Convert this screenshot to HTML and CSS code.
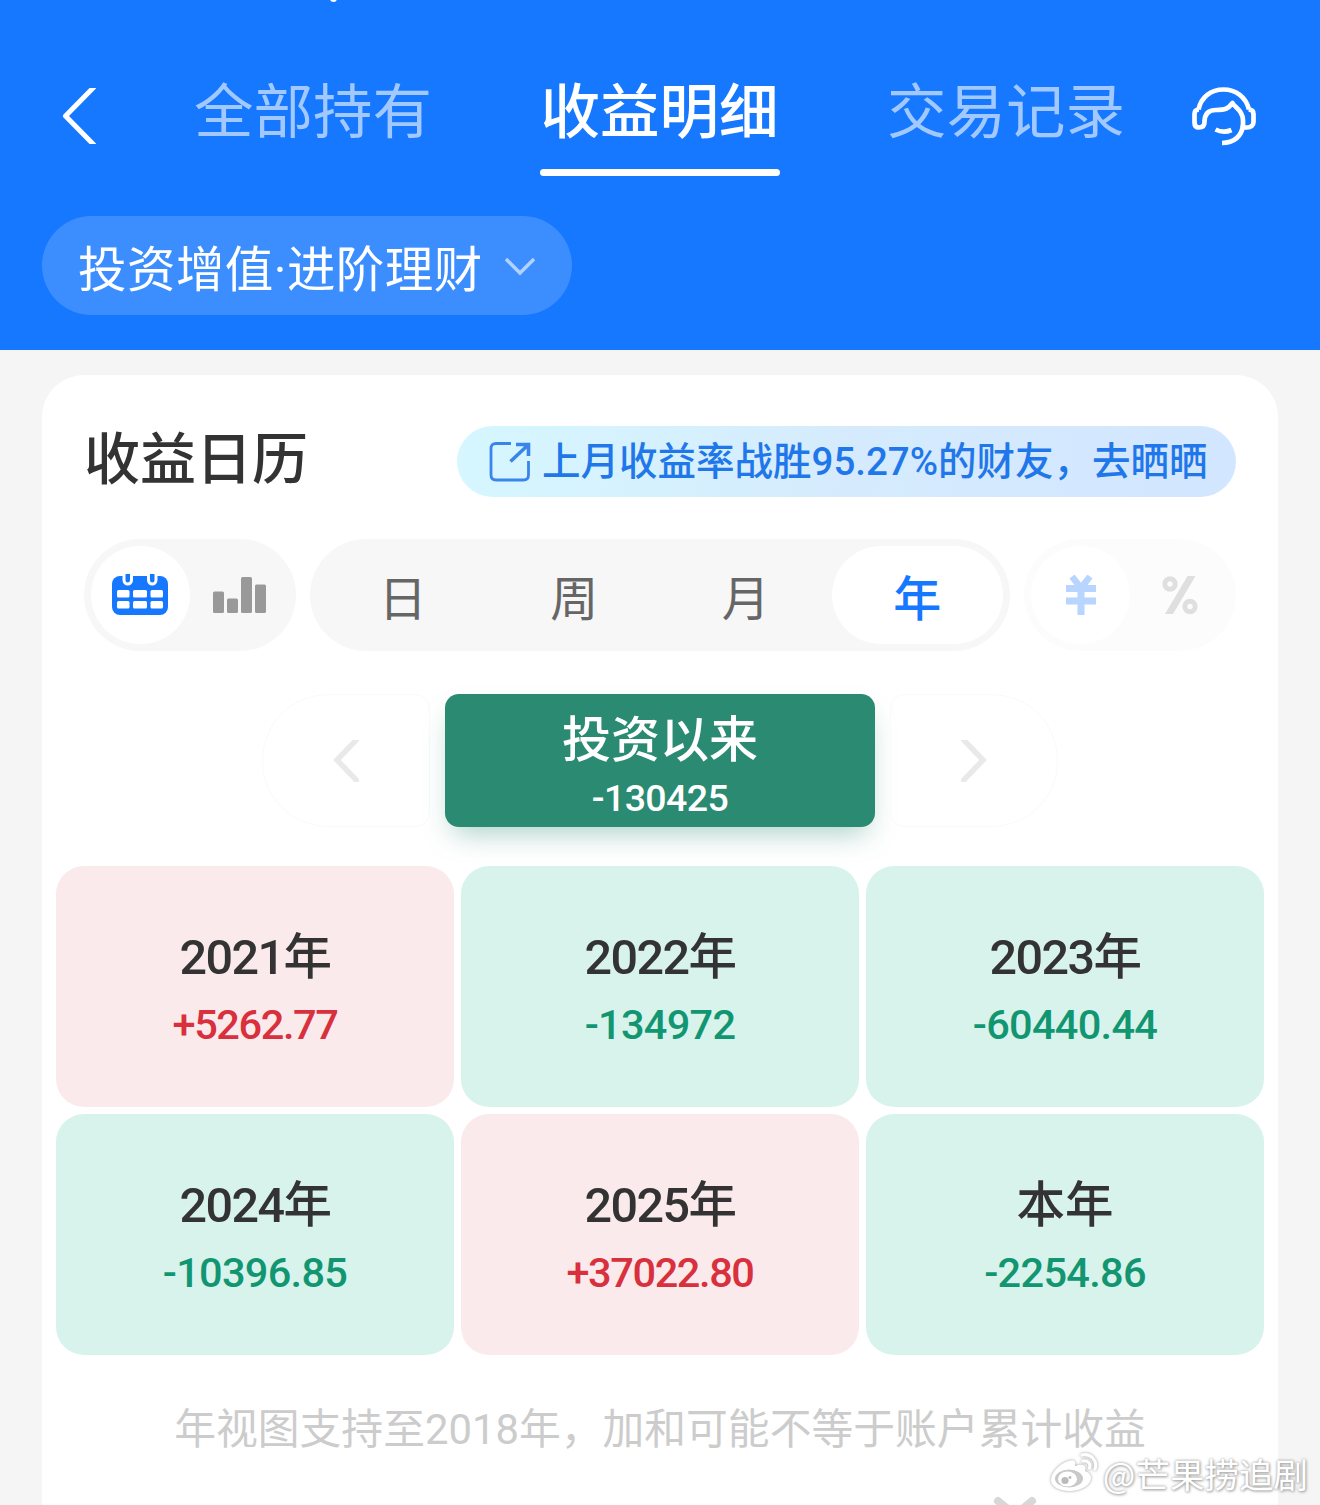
FILE: index.html
```
<!DOCTYPE html>
<html lang="zh-CN">
<head>
  <meta charset="UTF-8">
  <meta name="viewport" content="width=device-width, initial-scale=1.0">
  <title>收益明细</title>
  <link rel="stylesheet" href="styles.css">
</head>
<body>
  <div class="page">
    <header class="header">
      <span class="status-dot"></span>
      <div class="topbar">
        <svg class="back" viewBox="0 0 36 56" width="36" height="56">
          <path d="M36 -3 L5.500 28 L36 59" fill="none" stroke="#fff" stroke-width="5" stroke-linejoin="round"/>
        </svg>
        <nav class="tabs">
          <a class="tab">全部持有</a>
          <a class="tab active">收益明细</a>
          <a class="tab">交易记录</a>
        </nav>
        <svg class="service" viewBox="0 0 90 90" width="90" height="90" fill="none" stroke="#fff" stroke-width="4.700" stroke-linejoin="round">
          <path d="M18.500 39.500 C21 27 31 19.500 43.500 19.500 C56 19.500 66 27 69 39.500"/>
          <path d="M24.500 50 V52 C24.500 56 22 57.500 19 57.500 C16 57.500 14.500 55.500 14.500 52.500 V44 C14.500 41 16 39.500 19 39.500 M24.500 52 C24.500 44 28 40 36 40 C45 40 48 39 52.500 33 C54 37 63 40 63 50 V57.500 H67 C71 57.500 73.500 55.500 73.500 52 V44 C73.500 41 72 39.500 68.500 39.500"/>
          <path d="M63 55 C62 66 54 73 42 73"/>
          <path d="M35.500 59.500 Q43.500 63.500 51.500 60"/>
        </svg>
      </div>
      <div class="filter">
        <span>投资增值·进阶理财</span>
        <svg width="30" height="20" viewBox="0 0 30 20"><path d="M1 3 L15 17 L29 3" fill="none" stroke="#b1d2ff" stroke-width="3.500"/></svg>
      </div>
    </header>

    <main class="card">
      <div class="card-head">
        <h1>收益日历</h1>
        <a class="share">
          <svg width="42" height="42" viewBox="0 0 42 42" fill="none" stroke="#3a85ea" stroke-width="2.800">
            <path d="M22 2.500 H7 Q2 2.500 2 7.500 V34 Q2 39 7 39 H34.500 Q39.500 39 39.500 34 V20"/>
            <path d="M27 3.500 H39.500 V15 M39 4 L21.500 20.500" stroke-width="3.600"/>
          </svg>
          <span>上月收益率战胜95.27%的财友，去晒晒</span>
        </a>
      </div>

      <div class="switches">
        <div class="seg seg-icon">
          <span class="seg-item on">
            <svg width="58" height="42" viewBox="0 0 58 42">
              <rect x="0" y="2" width="56" height="39" rx="8" fill="#1677ff"/>
              <g fill="#1677ff" stroke="#fff" stroke-width="3">
                <rect x="12" y="-5" width="7.500" height="15" rx="3.700"/>
                <rect x="36.500" y="-5" width="7.500" height="15" rx="3.700"/>
              </g>
              <g fill="#fff">
                <rect x="5" y="16" width="12.500" height="7.500" rx="1.500"/>
                <rect x="21" y="16" width="14" height="7.500" rx="1.500"/>
                <rect x="38.500" y="16" width="12.500" height="7.500" rx="1.500"/>
                <rect x="5" y="27" width="12.500" height="7.500" rx="1.500"/>
                <rect x="21" y="27" width="14" height="7.500" rx="1.500"/>
                <rect x="38.500" y="27" width="12.500" height="7.500" rx="1.500"/>
              </g>
            </svg>
          </span>
          <span class="seg-item">
            <svg width="54" height="36" viewBox="0 0 54 36" fill="#999">
              <rect x="0" y="14.500" width="11" height="21.500" rx="1.500"/>
              <rect x="14" y="21.500" width="11" height="14.500" rx="1.500"/>
              <rect x="28" y="0" width="11" height="36" rx="1.500"/>
              <rect x="42" y="7.500" width="11" height="28.500" rx="1.500"/>
            </svg>
          </span>
        </div>
        <div class="seg seg-period">
          <span class="seg-item">日</span>
          <span class="seg-item">周</span>
          <span class="seg-item">月</span>
          <span class="seg-item on">年</span>
        </div>
        <div class="seg seg-icon disabled">
          <span class="seg-item on">
            <svg width="30" height="40" viewBox="0 0 30 40" fill="none" stroke="#1677ff" stroke-width="7">
              <path d="M6 1.500 L15 13 L24 1.500" stroke-width="6.500"/>
              <path d="M0 13.500 H30 M0 26 H30 M15 12 V40"/>
            </svg>
          </span>
          <span class="seg-item">
            <svg width="36" height="40" viewBox="0 0 36 40" fill="none" stroke="#999">
              <circle cx="8" cy="9" r="5.200" stroke-width="5"/>
              <circle cx="28" cy="31.500" r="5.200" stroke-width="5"/>
              <path d="M25.500 1 H33.500 L11 39 H3 Z" fill="#999" stroke="none"/>
            </svg>
          </span>
        </div>
      </div>

      <div class="range">
        <span class="arrow prev">
          <svg width="26" height="42" viewBox="0 0 26 42"><path d="M27 -4 L4 20 L27 44" fill="none" stroke="#e9e9e9" stroke-width="5.500"/></svg>
        </span>
        <div class="total">
          <strong>投资以来</strong>
          <span>-130425</span>
        </div>
        <span class="arrow next">
          <svg width="26" height="42" viewBox="0 0 26 42"><path d="M-1 -4 L22 20 L-1 44" fill="none" stroke="#e9e9e9" stroke-width="5.500"/></svg>
        </span>
      </div>

      <div class="years">
        <div class="year up"><b>2021年</b><span>+5262.77</span></div>
        <div class="year down"><b>2022年</b><span>-134972</span></div>
        <div class="year down"><b>2023年</b><span>-60440.44</span></div>
        <div class="year down"><b>2024年</b><span>-10396.85</span></div>
        <div class="year up"><b>2025年</b><span>+37022.80</span></div>
        <div class="year down"><b>本年</b><span>-2254.86</span></div>
      </div>

      <p class="note">年视图支持至2018年，加和可能不等于账户累计收益</p>
    </main>

    <svg class="more" width="44" height="10" viewBox="0 0 44 10"><path d="M5 5 L22 19 L39 5" fill="none" stroke="#d8d8d8" stroke-width="8" stroke-linecap="round"/></svg>

    <div class="watermark">
      <svg width="50" height="42" viewBox="0 0 50 42">
        <path d="M19 9 C10 12 2 21 2 28 C2 35 11 39 20 39 C32 39 42 33 42 26 C42 22 39 20 36 19 C38 14 34 11 26 14 C27 9 25 7 19 9 Z" fill="#fff"/>
        <ellipse cx="20" cy="26.500" rx="14" ry="9" fill="#c9c9c9"/>
        <ellipse cx="18.500" cy="27" rx="9.500" ry="7.500" fill="#fff"/>
        <circle cx="16" cy="28.500" r="3.600" fill="#bbb"/>
        <circle cx="21" cy="25.500" r="1.400" fill="#bbb"/>
        <path d="M33 3 C42 1 49 9 46 17 M34 9 C39 8 42 12 40.500 16" fill="none" stroke="#fff" stroke-width="3.200" stroke-linecap="round"/>
      </svg>
      <span>@芒果捞追剧</span>
    </div>
  </div>
</body>
</html>
```

FILE: styles.css
```
* {
  box-sizing: border-box;
}
body {
  margin: 0;
  font-family: "Noto Sans CJK SC", "Noto Sans", sans-serif;
  background: #f5f5f5;
  color: #333;
}
svg {
  display: block;
  flex: none;
}
.page {
  position: relative;
  width: 1320px;
  height: 1505px;
  overflow: hidden;
}

/* narrow digits next to Chinese text */
.filter, .share, .total span, .year, .note {
  font-family: Roboto, "Noto Sans CJK SC", sans-serif;
}

/* header */
.header {
  height: 350px;
  padding: 70px 50px 0 42px;
  background: #1677ff;
}
.status-dot {
  position: absolute;
  top: -5px;
  left: 330px;
  width: 7px;
  height: 7px;
  border-radius: 50%;
  background: #fff;
}
.topbar {
  display: flex;
  height: 106px;
}
.back {
  margin: 18px 0 0 18px;
}
.tabs {
  flex: 1;
  display: flex;
  justify-content: space-between;
  padding: 0 54px 0 97px;
}
.tab {
  display: flex;
  flex-direction: column;
  align-items: center;
  justify-content: space-between;
  width: 240px;
  height: 106px;
  line-height: 75px;
  font-size: 59.500px;
  white-space: nowrap;
  color: #a2c9ff;
}
.tab.active {
  color: #fff;
  font-weight: 500;
}
.tab.active::after {
  content: "";
  width: 240px;
  height: 7px;
  border-radius: 4px;
  background: #fff;
}
.filter {
  display: flex;
  align-items: center;
  gap: 23px;
  width: 530px;
  height: 99px;
  margin-top: 40px;
  padding-left: 36px;
  border-radius: 50px;
  background: #3c8eff;
  color: #fff;
  font-size: 48.500px;
}
.filter span {
  width: 404px;
  line-height: 91px;
  padding-top: 9px;
  letter-spacing: 0.450px;
  white-space: nowrap;
}

/* card */
.card {
  width: 1236px;
  height: 1200px;
  margin: 25px auto 0;
  border-radius: 42px;
  background: #fff;
}
.card-head {
  display: flex;
  justify-content: space-between;
  padding: 51px 42px 0;
}
.card-head h1 {
  margin: -6px 0 0;
  font-size: 56px;
  font-weight: 500;
  line-height: 70px;
}
.share {
  display: flex;
  align-items: center;
  gap: 11px;
  width: 779px;
  height: 71px;
  padding-left: 32px;
  border-radius: 36px;
  background: linear-gradient(100deg, #d6f7ff, #d5ebfd 50%, #d2e6ff);
  color: #1f77ea;
  font-size: 38.500px;
  font-weight: 500;
  line-height: 66px;
  white-space: nowrap;
}

/* switches */
.switches {
  display: flex;
  gap: 14px;
  margin-top: 42px;
  padding: 0 42px;
}
.seg {
  display: flex;
  height: 112px;
  padding: 7px;
  border-radius: 56px;
  background: #f7f7f7;
}
.seg-icon {
  width: 212px;
}
.seg-period {
  width: 700px;
  font-size: 48px;
  color: #666;
}
.seg-item {
  flex: 1;
  display: flex;
  align-items: center;
  justify-content: center;
  border-radius: 49px;
  line-height: 96px;
}
.seg-item.on {
  background: #fff;
  color: #1677ff;
  font-weight: 500;
}
.disabled {
  opacity: 0.3;
}

/* range */
.range {
  display: flex;
  justify-content: center;
  gap: 15px;
  margin-top: 43px;
}
.arrow {
  display: flex;
  align-items: center;
  justify-content: center;
  width: 168px;
  height: 133px;
  border: 1px solid #fafafa;
}
.prev {
  border-radius: 66px 14px 14px 66px;
}
.next {
  border-radius: 14px 66px 66px 14px;
}
.total {
  display: flex;
  flex-direction: column;
  align-items: center;
  width: 430px;
  height: 133px;
  padding-top: 7px;
  border-radius: 14px;
  background: #2b8a72;
  box-shadow: 0 14px 28px -8px rgba(43, 138, 114, 0.4);
  color: #fff;
  font-weight: 500;
}
.total strong {
  font-size: 49px;
  font-weight: 500;
  line-height: 70px;
}
.total span {
  font-size: 37.500px;
  line-height: 54px;
  letter-spacing: -0.600px;
}

/* years */
.years {
  display: grid;
  grid-template-columns: repeat(3, 1fr);
  gap: 7px;
  padding: 0 14px;
  margin-top: 39px;
}
.year {
  display: flex;
  flex-direction: column;
  align-items: center;
  height: 241px;
  padding-top: 56px;
  border-radius: 28px;
}
.year b {
  font-size: 48.500px;
  font-weight: 500;
  line-height: 71px;
  letter-spacing: -1.600px;
}
.year:last-child b {
  letter-spacing: 0;
}
.year span {
  font-size: 41.500px;
  font-weight: 500;
  line-height: 63px;
}
.up {
  background: #fbeaec;
}
.up span {
  color: #d9303e;
  letter-spacing: -1.400px;
}
.down {
  background: #d8f3eb;
}
.down span {
  color: #129672;
  letter-spacing: -0.700px;
}
.note {
  margin: 44px 0 0;
  font-size: 41.800px;
  line-height: 62px;
  text-align: center;
  white-space: nowrap;
  color: #ccc;
}

.more {
  position: absolute;
  left: 993px;
  top: 1496px;
}
.watermark {
  position: absolute;
  right: 12px;
  bottom: 11px;
  display: flex;
  align-items: center;
  gap: 4px;
  color: #fff;
  font-size: 34.500px;
  line-height: 42px;
  text-shadow: 0 0 3px #999, 1px 1px 3px #aaa;
}
.watermark svg {
  filter: drop-shadow(0 0 1.500px #999);
}
```
